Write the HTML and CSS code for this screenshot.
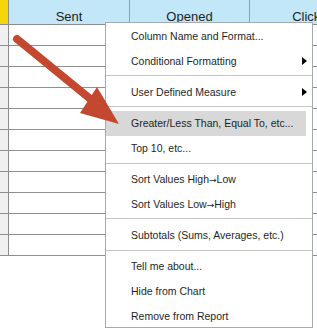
FILE: index.html
```html
<!DOCTYPE html>
<html lang="en">
<head>
    <meta charset="UTF-8">
    <title>Report grid</title>
    <link rel="stylesheet" href="styles.css">
</head>
<body>
    <div class="grid">
        <div class="row head">
            <div class="cell lead"></div>
            <div class="cell">Sent</div>
            <div class="cell">Opened</div>
            <div class="cell">Clicks</div>
        </div>
        <div class="row"><div class="cell lead"></div><div class="cell"></div><div class="cell"></div><div class="cell"></div></div>
        <div class="row"><div class="cell lead"></div><div class="cell"></div><div class="cell"></div><div class="cell"></div></div>
        <div class="row"><div class="cell lead"></div><div class="cell"></div><div class="cell"></div><div class="cell"></div></div>
        <div class="row"><div class="cell lead"></div><div class="cell"></div><div class="cell"></div><div class="cell"></div></div>
        <div class="row"><div class="cell lead"></div><div class="cell"></div><div class="cell"></div><div class="cell"></div></div>
        <div class="row"><div class="cell lead"></div><div class="cell"></div><div class="cell"></div><div class="cell"></div></div>
        <div class="row"><div class="cell lead"></div><div class="cell"></div><div class="cell"></div><div class="cell"></div></div>
        <div class="row"><div class="cell lead"></div><div class="cell"></div><div class="cell"></div><div class="cell"></div></div>
        <div class="row"><div class="cell lead"></div><div class="cell"></div><div class="cell"></div><div class="cell"></div></div>
        <div class="row"><div class="cell lead"></div><div class="cell"></div><div class="cell"></div><div class="cell"></div></div>
        <div class="row"><div class="cell lead"></div><div class="cell"></div><div class="cell"></div><div class="cell"></div></div>
    </div>

    <ul class="menu">
        <li class="item">Column Name and Format...</li>
        <li class="item sub">Conditional Formatting</li>
        <li class="sep"></li>
        <li class="item sub">User Defined Measure</li>
        <li class="sep"></li>
        <li class="item active">Greater/Less Than, Equal To, etc...</li>
        <li class="item">Top 10, etc...</li>
        <li class="sep low"></li>
        <li class="item">Sort Values High<span class="to">&#8594;</span>Low</li>
        <li class="item">Sort Values Low<span class="to">&#8594;</span>High</li>
        <li class="sep"></li>
        <li class="item">Subtotals (Sums, Averages, etc.)</li>
        <li class="sep low"></li>
        <li class="item">Tell me about...</li>
        <li class="item">Hide from Chart</li>
        <li class="item">Remove from Report</li>
    </ul>

    <!-- Hinweispfeil auf den markierten Menüpunkt -->
    <svg class="pointer" width="130" height="130" viewBox="0 0 130 130">
        <line x1="17" y1="39" x2="99" y2="106" stroke="#c4482f" stroke-width="8" stroke-linecap="round"/>
        <polygon points="119,124 97,87 80,113" fill="#c4482f"/>
    </svg>
</body>
</html>
```

FILE: styles.css
```css
body {
    margin: 0;
    font-family: 'Liberation Sans', Arial, sans-serif;
    background: #fff;
    width: 317px;
    height: 333px;
    overflow: hidden;
    position: relative;
}

.grid {
    width: 400px;
}

.row {
    display: flex;
    height: 21px;
    border-bottom: 1px solid #909090;
    box-sizing: border-box;
}

.cell {
    width: 120px;
    flex-shrink: 0;
    border-right: 1px solid #9a9a9a;
    box-sizing: border-box;
}

.cell.lead {
    width: 9px;
    background: #f0f0f0;
    border-right: 1px solid #8a8a8a;
}

.row .cell:nth-child(2) {
    width: 121px;
}

.head {
    height: 25px;
    background: #c2e7f8;
    border-bottom: 1px solid #8c8c8c;
}

.head .cell {
    padding-top: 9px;
    line-height: 15px;
    font-size: 13px;
    color: #1e1e1e;
    text-align: center;
}

.head .cell.lead {
    background: #f4d60a;
}

/* Kontextmenü */
.menu {
    position: absolute;
    left: 105px;
    top: 22px;
    width: 208px;
    height: 306px;
    box-sizing: border-box;
    margin: 0;
    padding: 1px 0 0;
    list-style: none;
    background: #fff;
    border: 1px solid #a3abb2;
}

.item {
    position: relative;
    height: 25px;
    line-height: 25px;
    padding-left: 25px;
    font-size: 10.5px;
    color: #1f1f1f;
    white-space: nowrap;
}

.item .to {
    font-family: 'DejaVu Sans', sans-serif;
    font-size: 9px;
}

.item.active {
    background: #d8d8d8;
    margin-right: 6px;
}

.item.sub::after {
    content: "";
    position: absolute;
    right: 5px;
    top: 8px;
    border-top: 4.5px solid transparent;
    border-bottom: 4.5px solid transparent;
    border-left: 5px solid #000;
}

.sep {
    height: 6px;
    box-sizing: border-box;
    padding-top: 1px;
}

.sep.low {
    padding-top: 2px;
}

.sep::before {
    content: "";
    display: block;
    height: 1px;
    background: #c4c4c4;
    border-bottom: 1px solid #fff;
}

.pointer {
    position: absolute;
    left: 0;
    top: 0;
}
```
